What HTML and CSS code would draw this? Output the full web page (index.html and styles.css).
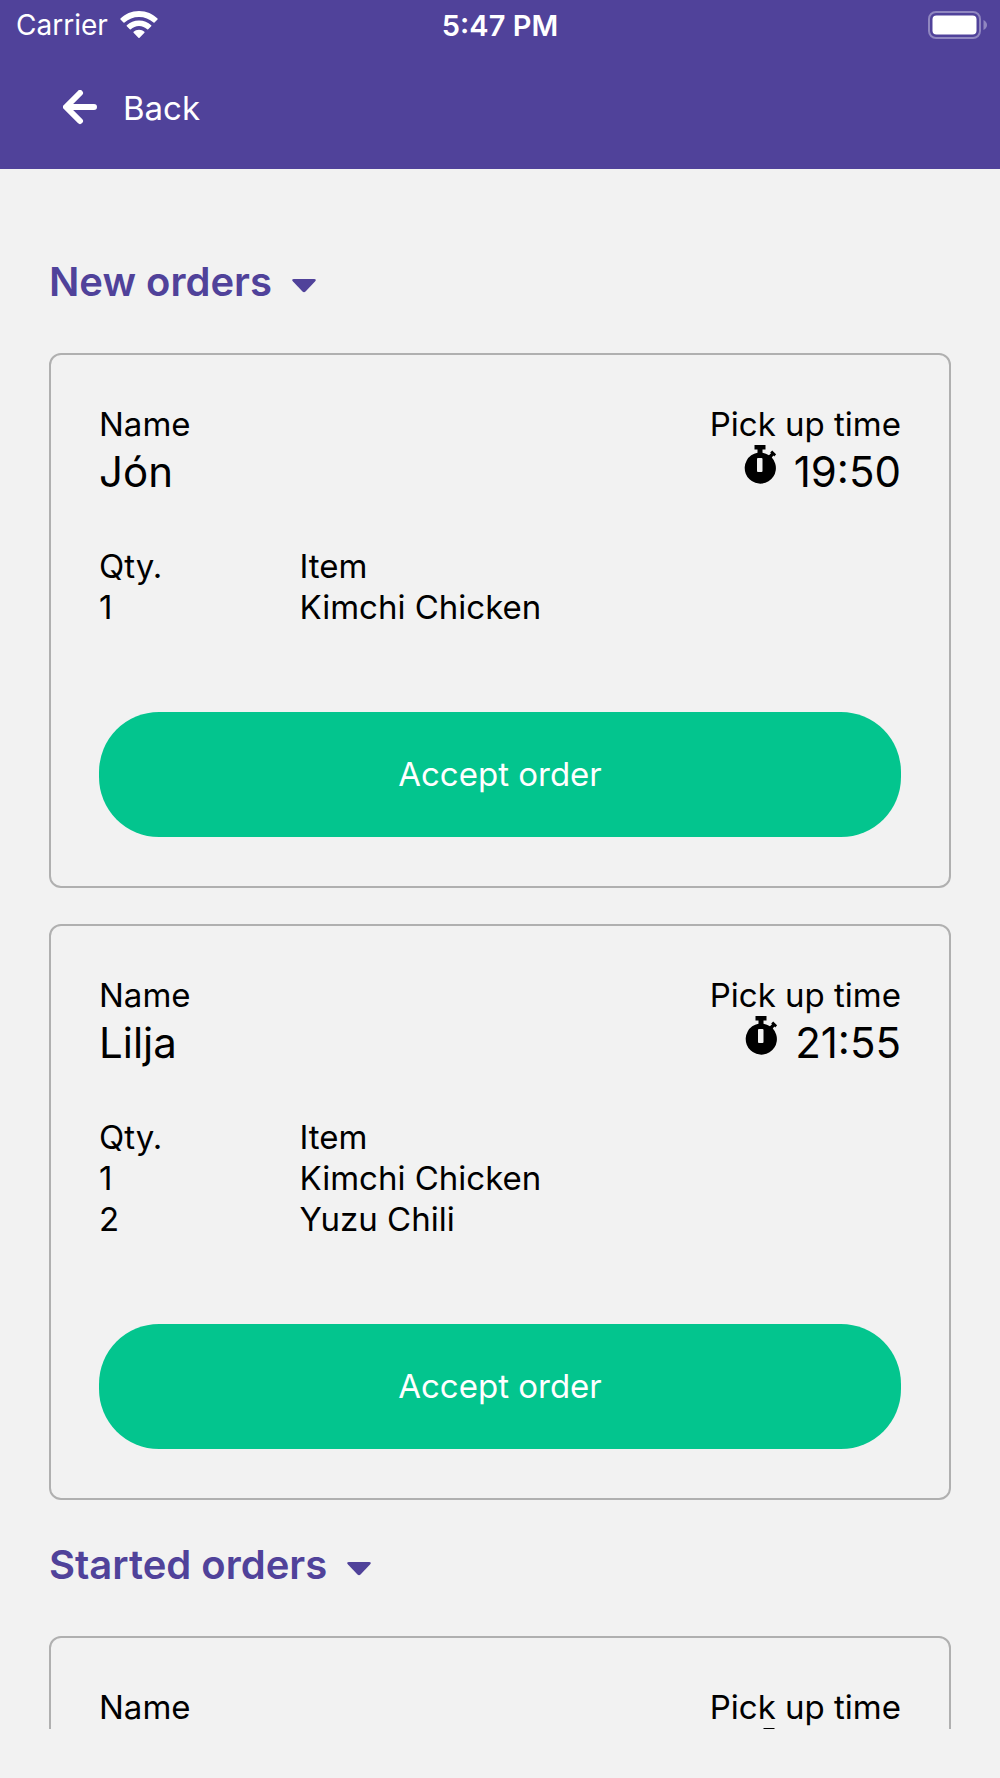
FILE: index.html
```html
<!DOCTYPE html>
<html lang="en">

<head>
    <meta charset="utf-8">
    <meta name="viewport" content="width=device-width">
    <title>Orders</title>
    <link rel="stylesheet" href="styles.css">
</head>

<body>
    <!-- icons used more than once -->
    <svg class="sprite" aria-hidden="true">
        <symbol id="stopwatch" viewBox="0 0 32 39">
            <path fill-rule="evenodd" d="M10.500 0h11v4.500H18.500v3.200a16 16 0 0 1 6.500 2.500l2-2-.8-.8 2-2 4 4-2 2-.8-.8-1.600 1.900A15.600 15.600 0 1 1 13.500 7.700V4.500H10.500zM14 13q-1 0-1 1v12q0 1 1 1h3.500q1 0 1-1V14q0-1-1-1z"/>
        </symbol>
        <symbol id="caret" viewBox="0 0 24 14">
            <path d="M2 0h20q3 0 1 2.500L13.500 12.500q-1.500 1.500-3 0L1 2.500Q-1 0 2 0z"/>
        </symbol>
    </svg>

    <header class="header">
        <div class="status">
            <div class="carrier">
                <span>Carrier</span>
                <svg class="wifi" viewBox="0 0 38 28" aria-hidden="true">
                    <path d="M19 0C11.500 0 5 3 .5 7.500q-.5.500 0 1l3 3q.5.500 1 0C8.500 8 13.500 6 19 6s10.500 2 14.500 5.500q.5.500 1 0l3-3q.5-.5 0-1C33 3 26.500 0 19 0z"/>
                    <path d="M19 9.500c-4.700 0-9 1.800-12.200 4.700q-.5.500 0 1l3 3q.5.500 1 0c2.200-1.900 5-3.200 8.200-3.200s6 1.300 8.200 3.200q.5.500 1 0l3-3q.5-.5 0-1C28 11.300 23.700 9.500 19 9.500z"/>
                    <path d="M19 18.800c-2.200 0-4 .8-5.400 2q-.5.500 0 1l4.800 5q.6.600 1.200 0l4.800-5q.5-.5 0-1c-1.400-1.200-3.200-2-5.400-2z"/>
                </svg>
            </div>
            <div class="clock">5:47 PM</div>
            <svg class="battery" viewBox="0 0 60 28" aria-hidden="true">
                <rect x="1" y="1" width="51" height="26" rx="7" fill="none" stroke="#9087c0" stroke-width="2"/>
                <rect x="4.500" y="4.500" width="44" height="19" rx="4"/>
                <path d="M55.500 9q3.500 2 3.500 5t-3.500 5z" fill="#9087c0"/>
            </svg>
        </div>
        <a class="back" href="#">
            <svg class="arrow" viewBox="0 0 34 38" aria-hidden="true">
                <path d="M17 3L3 17l14 14M3.500 17H31" fill="none" stroke="#fff" stroke-width="6" stroke-linecap="round" stroke-linejoin="round"/>
            </svg>
            <span>Back</span>
        </a>
    </header>

    <main class="orders">
        <h2 class="title">
            <button type="button">New orders <svg class="caret" aria-hidden="true"><use href="#caret"/></svg></button>
        </h2>
        <div class="list">
            <section class="card">
                <div class="info">
                    <div>
                        <div>Name</div>
                        <div class="big">Jón</div>
                    </div>
                    <div class="pickup">
                        <div>Pick up time</div>
                        <div class="big time"><svg class="stopwatch" aria-hidden="true"><use href="#stopwatch"/></svg>19:50</div>
                    </div>
                </div>
                <table class="items">
                    <thead>
                        <tr><th class="qty">Qty.</th><th>Item</th></tr>
                    </thead>
                    <tbody>
                        <tr><td>1</td><td>Kimchi Chicken</td></tr>
                    </tbody>
                </table>
                <button class="accept" type="button">Accept order</button>
            </section>

            <section class="card">
                <div class="info">
                    <div>
                        <div>Name</div>
                        <div class="big">Lilja</div>
                    </div>
                    <div class="pickup">
                        <div>Pick up time</div>
                        <div class="big time"><svg class="stopwatch" aria-hidden="true"><use href="#stopwatch"/></svg>21:55</div>
                    </div>
                </div>
                <table class="items">
                    <thead>
                        <tr><th class="qty">Qty.</th><th>Item</th></tr>
                    </thead>
                    <tbody>
                        <tr><td>1</td><td>Kimchi Chicken</td></tr>
                        <tr><td>2</td><td>Yuzu Chili</td></tr>
                    </tbody>
                </table>
                <button class="accept" type="button">Accept order</button>
            </section>
        </div>

        <h2 class="title">
            <button type="button">Started orders <svg class="caret" aria-hidden="true"><use href="#caret"/></svg></button>
        </h2>
        <div class="list">
            <section class="card">
                <div class="info">
                    <div>
                        <div>Name</div>
                    </div>
                    <div class="pickup">
                        <div>Pick up time</div>
                        <div class="big time"><svg class="stopwatch" aria-hidden="true"><use href="#stopwatch"/></svg>18:15</div>
                    </div>
                </div>
            </section>
        </div>
    </main>
</body>

</html>
```
FILE: styles.css
```css
* {
    box-sizing: border-box;
}

body {
    margin: 0;
    height: 100vh;
    display: flex;
    flex-direction: column;
    /* room for the home indicator */
    padding-bottom: 49px;
    background: #f2f2f2;
    color: #000;
    font-family: Inter, sans-serif;
    font-size: 33px;
    line-height: 41px;
}

button {
    border: 0;
    padding: 0;
    font: inherit;
    cursor: pointer;
}

.sprite {
    display: none;
}

/* header */

.header {
    flex: none;
    padding-bottom: 40px;
    background: #50429a;
    color: #fff;
    fill: #fff;
}

.status {
    display: grid;
    grid-template-columns: 1fr auto 1fr;
    align-items: center;
    height: 50px;
    padding: 0 12px;
    font-size: 28px;
}

.carrier {
    display: flex;
    align-items: center;
    gap: 12px;
    padding-left: 4px;
}

.wifi {
    width: 38px;
    height: 28px;
}

.clock {
    font-size: 29px;
    font-weight: 600;
}

.battery {
    justify-self: end;
    width: 60px;
    height: 28px;
}

.back {
    display: flex;
    align-items: center;
    gap: 26px;
    width: max-content;
    margin: 38px 0 0 63px;
    color: #fff;
    text-decoration: none;
}

.arrow {
    width: 34px;
    height: 38px;
}

/* orders */

.orders {
    flex: 1;
    min-height: 0;
    overflow: auto;
    scrollbar-width: none;
    padding: 48px 49px 0;
}

.title {
    margin: 42px 0 48px;
    font-size: 40px;
    font-weight: 600;
    line-height: 46px;
}

.title button {
    display: flex;
    align-items: center;
    gap: 20px;
    background: none;
    color: #50429a;
}

.caret {
    width: 24px;
    height: 14px;
    margin-top: 8px;
    fill: #50429a;
}

.list {
    display: flex;
    flex-direction: column;
    gap: 36px;
}

.card {
    padding: 49px 48px;
    border: 2px solid #b0b0b0;
    border-radius: 12px;
}

.info {
    display: flex;
    justify-content: space-between;
}

.pickup {
    text-align: right;
}

.big {
    font-size: 42px;
    line-height: 54px;
}

.time {
    display: flex;
    justify-content: flex-end;
    gap: 18px;
}

.stopwatch {
    width: 32px;
    height: 39px;
}

.items {
    width: 100%;
    margin: 47px 0 84px;
    border-collapse: collapse;
    table-layout: fixed;
    text-align: left;
}

.items th,
.items td {
    padding: 0;
    font-weight: 400;
}

.items .qty {
    width: 25%;
}

.accept {
    display: block;
    width: 100%;
    height: 125px;
    border-radius: 60px;
    background: #03c58e;
    color: #fff;
}
```
